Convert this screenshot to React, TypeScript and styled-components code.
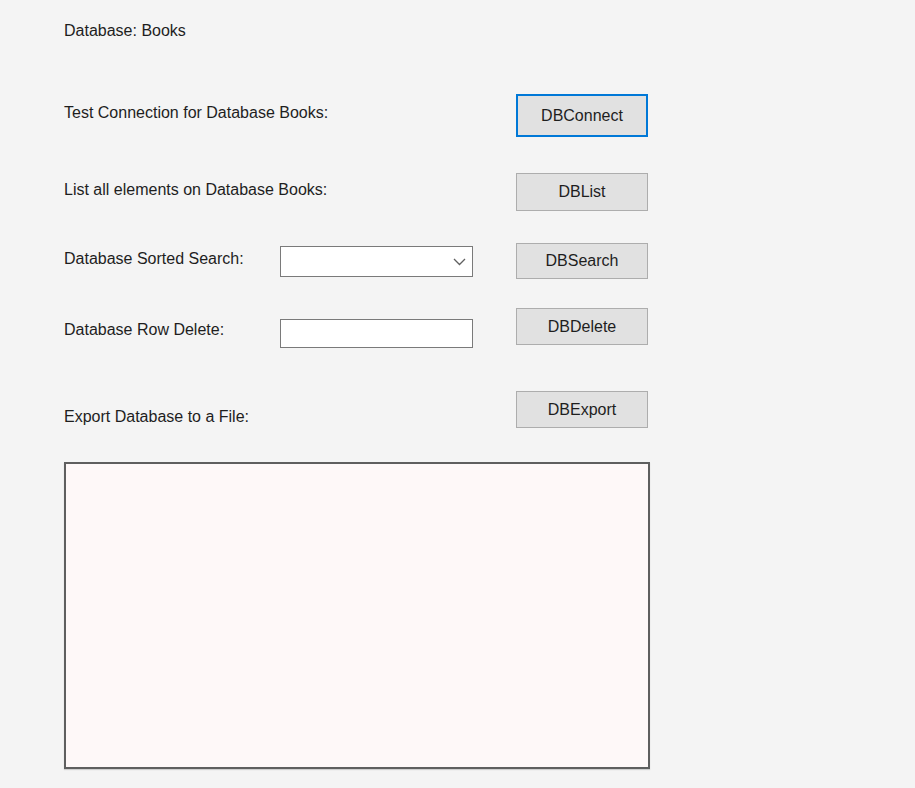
import styled, { createGlobalStyle, css } from "styled-components";

const GlobalStyle = createGlobalStyle`
  html, body {
    margin: 0;
    padding: 0;
    background: #f4f4f4;
  }
  body {
    font-family: "Liberation Sans", Arial, sans-serif;
    font-size: 16px;
    color: #1e1e1e;
  }
`;

const Form = styled.div`
  display: flex;
  flex-direction: column;
  width: 915px;
  height: 788px;
  padding: 21px 0 0 64px;
  box-sizing: border-box;
  background: #f4f4f4;
`;

const Title = styled.div`
  line-height: 20px;
  height: 20px;
`;

const Row = styled.div<{ top: number }>`
  display: grid;
  grid-template-columns: 216px 193px 43px 132px;
  align-items: start;
  margin-top: ${p => p.top}px;
`;

const Label = styled.div<{ offset: number }>`
  grid-column: 1;
  line-height: 20px;
  margin-top: ${p => p.offset}px;
  white-space: nowrap;
`;

const Field = styled.div<{ offset: number; h: number }>`
  grid-column: 2;
  position: relative;
  margin-top: ${p => p.offset}px;
  height: ${p => p.h}px;
  box-sizing: border-box;
  background: #fff;
  border: 1px solid #7a7a7a;
`;

const Chevron = styled.svg`
  position: absolute;
  right: 6px;
  top: 50%;
  transform: translateY(-50%);
`;

const Button = styled.div<{ h: number; focused?: boolean }>`
  grid-column: 4;
  display: flex;
  align-items: center;
  justify-content: center;
  height: ${p => p.h}px;
  box-sizing: border-box;
  background: #e1e1e1;
  border: 1px solid #adadad;
  color: #1e1e1e;
  ${p => p.focused && css`
    border: 2px solid #0078d7;
  `}
`;

const Output = styled.div`
  margin-top: 34px;
  width: 586px;
  height: 307px;
  box-sizing: border-box;
  background: #fef8f8;
  border: 2px solid #5f5f5f;
  box-shadow: 0 1px 1px rgba(0 0 0 / 0.15);
`;

export default function App() {
  return (
    <>
      <GlobalStyle />
      <Form>
        <Title>Database: Books</Title>

        <Row top={53}>
          <Label offset={9}>Test Connection for Database Books:</Label>
          <Button h={43} focused>DBConnect</Button>
        </Row>

        <Row top={36}>
          <Label offset={7}>List all elements on Database Books:</Label>
          <Button h={38}>DBList</Button>
        </Row>

        <Row top={32}>
          <Label offset={6}>Database Sorted Search:</Label>
          <Field offset={3} h={31}>
            <Chevron width="13" height="8" viewBox="0 0 13 8">
              <polyline points="1,1 6.5,6.5 12,1" fill="none" stroke="#606060" strokeWidth="1.3" />
            </Chevron>
          </Field>
          <Button h={36}>DBSearch</Button>
        </Row>

        <Row top={29}>
          <Label offset={12}>Database Row Delete:</Label>
          <Field offset={11} h={29} />
          <Button h={37}>DBDelete</Button>
        </Row>

        <Row top={43}>
          <Label offset={16}>Export Database to a File:</Label>
          <Button h={37}>DBExport</Button>
        </Row>

        <Output />
      </Form>
    </>
  );
}
